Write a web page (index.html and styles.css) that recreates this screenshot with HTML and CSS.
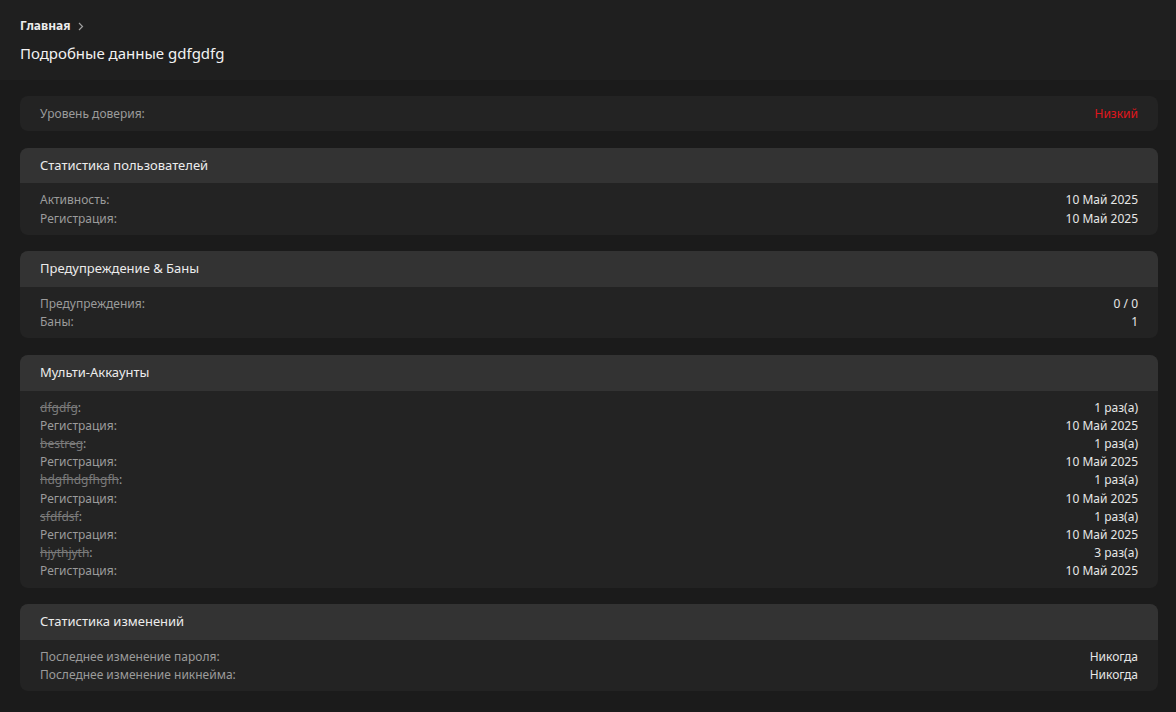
FILE: index.html
```html
<!DOCTYPE html>
<html lang="ru">
<head>
  <meta charset="UTF-8" />
  <title>Подробные данные gdfgdfg</title>
  <link rel="stylesheet" href="styles.css">
</head>
<body>
  <header class="top">
    <nav class="crumbs">
      <a href="#">Главная</a>
      <svg class="sep" width="6" height="9" viewBox="0 0 6 9"><path d="M1 1l3.5 3.5L1 8" fill="none" stroke="#a0a0a0" stroke-width="1.2"/></svg>
    </nav>
    <h1>Подробные данные gdfgdfg</h1>
  </header>

  <main class="content">
    <section class="card">
      <div class="card-body single">
        <div class="row"><span class="key">Уровень доверия:</span><span class="val low">Низкий</span></div>
      </div>
    </section>

    <section class="card">
      <div class="card-head">Статистика пользователей</div>
      <div class="card-body">
        <div class="row"><span class="key">Активность:</span><span class="val">10 Май 2025</span></div>
        <div class="row"><span class="key">Регистрация:</span><span class="val">10 Май 2025</span></div>
      </div>
    </section>

    <section class="card">
      <div class="card-head">Предупреждение &amp; Баны</div>
      <div class="card-body">
        <div class="row"><span class="key">Предупреждения:</span><span class="val">0 / 0</span></div>
        <div class="row"><span class="key">Баны:</span><span class="val">1</span></div>
      </div>
    </section>

    <section class="card">
      <div class="card-head">Мульти-Аккаунты</div>
      <div class="card-body">
        <div class="row"><span class="key"><s>dfgdfg</s>:</span><span class="val">1 раз(а)</span></div>
        <div class="row"><span class="key">Регистрация:</span><span class="val">10 Май 2025</span></div>
        <div class="row"><span class="key"><s>bestreg</s>:</span><span class="val">1 раз(а)</span></div>
        <div class="row"><span class="key">Регистрация:</span><span class="val">10 Май 2025</span></div>
        <div class="row"><span class="key"><s>hdgfhdgfhgfh</s>:</span><span class="val">1 раз(а)</span></div>
        <div class="row"><span class="key">Регистрация:</span><span class="val">10 Май 2025</span></div>
        <div class="row"><span class="key"><s>sfdfdsf</s>:</span><span class="val">1 раз(а)</span></div>
        <div class="row"><span class="key">Регистрация:</span><span class="val">10 Май 2025</span></div>
        <div class="row"><span class="key"><s>hjythjyth</s>:</span><span class="val">3 раз(а)</span></div>
        <div class="row"><span class="key">Регистрация:</span><span class="val">10 Май 2025</span></div>
      </div>
    </section>

    <section class="card">
      <div class="card-head">Статистика изменений</div>
      <div class="card-body">
        <div class="row"><span class="key">Последнее изменение пароля:</span><span class="val">Никогда</span></div>
        <div class="row"><span class="key">Последнее изменение никнейма:</span><span class="val">Никогда</span></div>
      </div>
    </section>
  </main>
</body>
</html>
```

FILE: styles.css
```css
body {
  margin: 0;
  background-color: #1b1b1b;
  color: #e6e6e6;
  font-family: "Noto Sans", "Open Sans", sans-serif;
  font-size: 12px;
}
.top {
  background-color: #1f1f1f;
  padding: 17px 20px 17px;
  height: 46px;
}
.crumbs {
  display: flex;
  align-items: center;
  gap: 8px;
  font-size: 12px;
  line-height: 18px;
}
.crumbs a {
  color: #ececec;
  font-weight: bold;
  text-decoration: none;
}
.crumbs .sep {
  display: block;
}
h1 {
  margin: 8px 0 0;
  font-size: 15px;
  font-weight: normal;
  line-height: 20px;
  color: #f2f2f2;
}
.content {
  padding: 16px 18px 20px 20px;
  display: flex;
  flex-direction: column;
  gap: 16.6px;
}
.card {
  background-color: #232323;
  border-radius: 8px;
  overflow: hidden;
}
.card-head {
  background-color: #333333;
  height: 35.6px;
  line-height: 35.6px;
  padding: 0 20px;
  font-size: 13px;
  color: #ececec;
}
.card-body {
  padding: 8px 20px 7px;
}
.card-body.single {
  padding: 9px 20px 8px;
}
.row {
  display: flex;
  justify-content: space-between;
  line-height: 18.2px;
}
.key {
  color: #9b9b9b;
}
.key s {
  color: #7a7a7a;
}
.val {
  color: #e6e6e6;
}
.val.low {
  color: #e0161c;
}
```
